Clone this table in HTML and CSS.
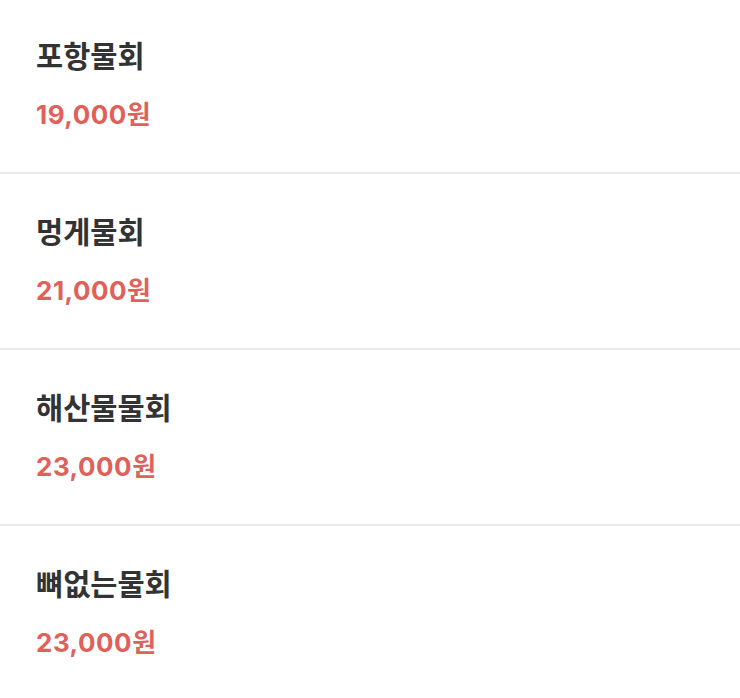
FILE: index.html
```html
<!DOCTYPE html>
<html lang="ko">
<head>
<meta charset="utf-8">
<link rel="stylesheet" href="styles.css">
</head>
<body>
<ul class="menu">
  <li class="item"><div class="name">포항물회</div><div class="price">19,000원</div></li>
  <li class="item"><div class="name">멍게물회</div><div class="price">21,000원</div></li>
  <li class="item"><div class="name">해산물물회</div><div class="price">23,000원</div></li>
  <li class="item"><div class="name">뼈없는물회</div><div class="price">23,000원</div></li>
</ul>
</body>
</html>
```
FILE: styles.css
```css
html, body { margin: 0; padding: 0; background: #fff; }
body { font-family: "Noto Sans CJK KR", "Noto Sans", sans-serif; }
.menu { list-style: none; margin: -2px 0 0; padding: 0; }
.item {
  padding: 39px 36px 41px;
  border-bottom: 2px solid #eaeaea;
  display: flex;
  flex-direction: column;
  gap: 27px;
}
.name {
  font-size: 29.5px;
  line-height: 34px;
  font-weight: 700;
  color: #333333;
}
.price {
  font-family: "Inter", "Noto Sans CJK KR", sans-serif;
  font-size: 26px;
  line-height: 33px;
  font-weight: 700;
  letter-spacing: 0.5px;
  color: #e0615a;
}
```
